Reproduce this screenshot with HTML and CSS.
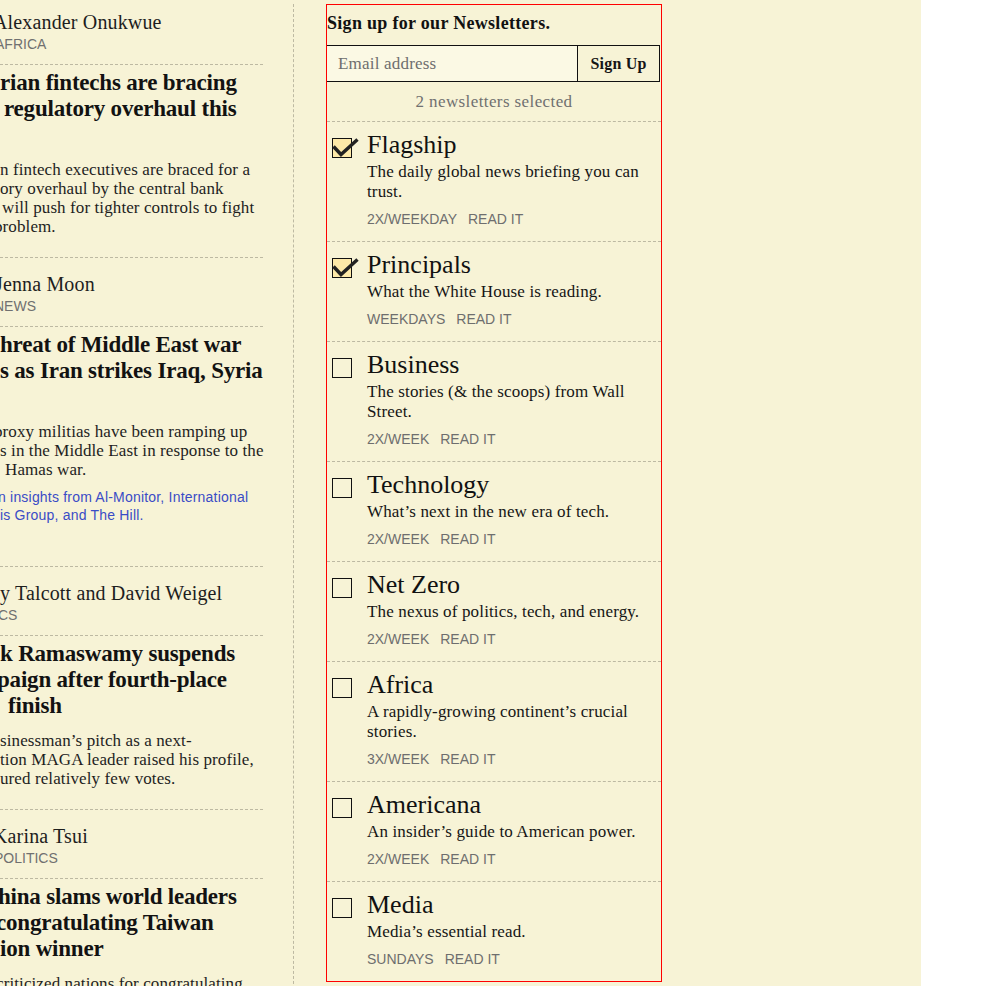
FILE: index.html
```html
<!DOCTYPE html>
<html lang="en">
<head>
<meta charset="utf-8">
<title>Newsletters</title>
<link rel="stylesheet" href="styles.css">
</head>
<body>
<div class="page">
  <aside class="feed">
    <article class="story story--first">
      <div class="byline">
        <div class="author cut7">Alexander Onukwue</div>
        <div class="section cut5">AFRICA</div>
      </div>
      <div class="story-body">
        <h2 class="headline"><span class="ln">rian fintechs are bracing</span><span class="ln in4">regulatory overhaul this</span><span class="ln">&nbsp;</span></h2>
        <p class="summary"><span class="ln">n fintech executives are braced for a</span><span class="ln">ory overhaul by the central bank</span><span class="ln in2">will push for tighter controls to fight</span><span class="ln cut6">problem.</span></p>
      </div>
    </article>
    <article class="story">
      <div class="byline">
        <div class="author cut5">Jenna Moon</div>
        <div class="section cut6">NEWS</div>
      </div>
      <div class="story-body">
        <h2 class="headline"><span class="ln">hreat of Middle East war</span><span class="ln">s as Iran strikes Iraq, Syria</span><span class="ln">&nbsp;</span></h2>
        <p class="summary"><span class="ln cut6">proxy militias have been ramping up</span><span class="ln">s in the Middle East in response to the</span><span class="ln in5">Hamas war.</span></p>
        <p class="more"><span class="ln cut2">n insights from Al-Monitor, International</span><span class="ln">is Group, and The Hill.</span></p>
      </div>
    </article>
    <article class="story">
      <div class="byline">
        <div class="author">y Talcott and David Weigel</div>
        <div class="section cut2">CS</div>
      </div>
      <div class="story-body">
        <h2 class="headline"><span class="ln">k Ramaswamy suspends</span><span class="ln cut3">paign after fourth-place</span><span class="ln in8">finish</span></h2>
        <p class="summary"><span class="ln">sinessman’s pitch as a next-</span><span class="ln">tion MAGA leader raised his profile,</span><span class="ln">ured relatively few votes.</span></p>
      </div>
    </article>
    <article class="story">
      <div class="byline">
        <div class="author cut7">Karina Tsui</div>
        <div class="section cut6">POLITICS</div>
      </div>
      <div class="story-body">
        <h2 class="headline"><span class="ln cut2">hina slams world leaders</span><span class="ln cut4">congratulating Taiwan</span><span class="ln">ion winner</span></h2>
        <p class="summary"><span class="ln cut4">criticized nations for congratulating</span></p>
      </div>
    </article>
  </aside>

  <section class="signup">
    <h3 class="signup-title">Sign up for our Newsletters.</h3>
    <form class="signup-form">
      <input class="email" type="email" placeholder="Email address">
      <button class="submit" type="button">Sign Up</button>
    </form>
    <div class="count">2 newsletters selected</div>
    <ul class="letters">
      <li class="letter">
        <span class="box box--on"><svg class="tick" viewBox="0 0 28 22" width="28" height="22"><polyline points="1.5,8.5 9,16.5 25.5,1.5"/></svg></span>
        <div class="letter-info">
          <div class="letter-name">Flagship</div>
          <div class="letter-desc">The daily global news briefing you can trust.</div>
          <div class="letter-meta"><span>2X/WEEKDAY</span><span>READ IT</span></div>
        </div>
      </li>
      <li class="letter">
        <span class="box box--on"><svg class="tick" viewBox="0 0 28 22" width="28" height="22"><polyline points="1.5,8.5 9,16.5 25.5,1.5"/></svg></span>
        <div class="letter-info">
          <div class="letter-name">Principals</div>
          <div class="letter-desc">What the White House is reading.</div>
          <div class="letter-meta"><span>WEEKDAYS</span><span>READ IT</span></div>
        </div>
      </li>
      <li class="letter">
        <span class="box"></span>
        <div class="letter-info">
          <div class="letter-name">Business</div>
          <div class="letter-desc">The stories (&amp; the scoops) from Wall Street.</div>
          <div class="letter-meta"><span>2X/WEEK</span><span>READ IT</span></div>
        </div>
      </li>
      <li class="letter">
        <span class="box"></span>
        <div class="letter-info">
          <div class="letter-name">Technology</div>
          <div class="letter-desc">What’s next in the new era of tech.</div>
          <div class="letter-meta"><span>2X/WEEK</span><span>READ IT</span></div>
        </div>
      </li>
      <li class="letter">
        <span class="box"></span>
        <div class="letter-info">
          <div class="letter-name">Net Zero</div>
          <div class="letter-desc">The nexus of politics, tech, and energy.</div>
          <div class="letter-meta"><span>2X/WEEK</span><span>READ IT</span></div>
        </div>
      </li>
      <li class="letter">
        <span class="box"></span>
        <div class="letter-info">
          <div class="letter-name">Africa</div>
          <div class="letter-desc">A rapidly-growing continent’s crucial stories.</div>
          <div class="letter-meta"><span>3X/WEEK</span><span>READ IT</span></div>
        </div>
      </li>
      <li class="letter">
        <span class="box"></span>
        <div class="letter-info">
          <div class="letter-name">Americana</div>
          <div class="letter-desc">An insider’s guide to American power.</div>
          <div class="letter-meta"><span>2X/WEEK</span><span>READ IT</span></div>
        </div>
      </li>
      <li class="letter">
        <span class="box"></span>
        <div class="letter-info">
          <div class="letter-name">Media</div>
          <div class="letter-desc">Media’s essential read.</div>
          <div class="letter-meta"><span>SUNDAYS</span><span>READ IT</span></div>
        </div>
      </li>
    </ul>
  </section>
</div>
</body>
</html>
```

FILE: styles.css
```css
html, body {
  margin: 0;
  padding: 0;
  background: #ffffff;
  overflow: hidden;
}

.page {
  width: 921px;
  height: 986px;
  box-sizing: border-box;
  padding-top: 4px;
  background: #f7f3d6;
  display: flex;
  align-items: flex-start;
  overflow: hidden;
  font-family: "Liberation Serif", "Times New Roman", serif;
  color: #161616;
}

/* ---------- left feed ---------- */
.feed {
  width: 293px;
  height: 990px;
  border-right: 1px dashed #bdb9a2;
  overflow: hidden;
  flex: none;
}

.story {
  width: 263px;
  border-bottom: 1px dashed #bdb9a2;
}

.ln {
  display: block;
  white-space: nowrap;
}

.cut2 { margin-left: -2px; }
.cut3 { margin-left: -3px; }
.cut4 { margin-left: -4px; }
.cut5 { margin-left: -5px; }
.cut6 { margin-left: -6px; }
.cut7 { margin-left: -7px; }
.in2 { margin-left: 2px; }
.in4 { margin-left: 4px; }
.in5 { margin-left: 5px; }
.in8 { margin-left: 8px; }

.byline {
  padding: 14px 0 12px;
}

.story--first .byline {
  padding-top: 6px;
}

.author {
  font-size: 20px;
  line-height: 24px;
  letter-spacing: 0.15px;
  color: #1e1e1e;
  white-space: nowrap;
}

.section {
  margin-top: 2px;
  font-family: "Liberation Sans", Arial, sans-serif;
  font-size: 14px;
  line-height: 16px;
  color: #707070;
  white-space: nowrap;
}

.story-body {
  border-top: 1px dashed #bdb9a2;
  padding: 5px 0 21px;
}

.headline {
  margin: 0;
  font-size: 23px;
  line-height: 26px;
  font-weight: 700;
  letter-spacing: -0.2px;
  color: #121212;
}

.summary {
  margin: 12px 0 0;
  font-size: 17px;
  line-height: 19px;
  letter-spacing: 0.1px;
  color: #1e1e1e;
}

.more {
  margin: 9px 0 21px;
  font-family: "Liberation Sans", Arial, sans-serif;
  font-size: 14px;
  line-height: 18px;
  letter-spacing: 0.2px;
  color: #3a4cc6;
}

/* ---------- newsletter panel ---------- */
.signup {
  width: 336px;
  height: 978px;
  box-sizing: border-box;
  margin-left: 32px;
  border: 1px solid #ff0000;
  flex: none;
}

.signup-title {
  margin: 0;
  padding-top: 6px;
  font-size: 18px;
  line-height: 24px;
  font-weight: 700;
  letter-spacing: 0.3px;
  color: #111;
}

.signup-form {
  margin: 10px 0 0;
  width: 333px;
  height: 37px;
  box-sizing: border-box;
  display: flex;
  border-top: 1px solid #111;
  border-bottom: 1px solid #111;
}

.email {
  flex: 1;
  min-width: 0;
  margin: 0;
  border: 0;
  padding: 0 0 0 11px;
  background: #fbf9e4;
  font-family: "Liberation Serif", "Times New Roman", serif;
  font-size: 17px;
  letter-spacing: 0.2px;
  color: #111;
  outline: none;
}

.email::placeholder {
  color: #6e6e6e;
  opacity: 1;
}

.submit {
  width: 83px;
  margin: 0;
  padding: 0;
  border: 0;
  border-left: 1px solid #111;
  border-right: 1px solid #111;
  background: transparent;
  font-family: "Liberation Serif", "Times New Roman", serif;
  font-size: 16px;
  font-weight: 700;
  letter-spacing: 0.2px;
  color: #151515;
}

.count {
  padding: 10px 0 9px;
  text-align: center;
  font-size: 17px;
  line-height: 20px;
  letter-spacing: 0.4px;
  color: #707070;
}

.letters {
  list-style: none;
  margin: 0;
  padding: 0;
}

.letter {
  border-top: 1px dashed #bdb9a2;
  padding: 9px 0 14px 5px;
  display: grid;
  grid-template-columns: 20px 1fr;
  column-gap: 15px;
  align-items: start;
}

.box {
  position: relative;
  width: 20px;
  height: 20px;
  box-sizing: border-box;
  margin-top: 7px;
  border: 1.5px solid #111;
}

.box--on {
  background: #fde9a8;
}

.tick {
  position: absolute;
  left: -1.5px;
  top: -1.5px;
  overflow: visible;
}

.tick polyline {
  fill: none;
  stroke: #222;
  stroke-width: 3.4;
}

.letter-name {
  font-size: 26px;
  line-height: 27px;
  color: #111;
}

.letter-desc {
  margin-top: 4px;
  font-size: 17px;
  line-height: 20px;
  letter-spacing: 0.15px;
  color: #151515;
}

.letter-meta {
  margin-top: 9px;
  display: flex;
  gap: 11px;
  font-family: "Liberation Sans", Arial, sans-serif;
  font-size: 14px;
  line-height: 16px;
  color: #6e6e6e;
}
```
